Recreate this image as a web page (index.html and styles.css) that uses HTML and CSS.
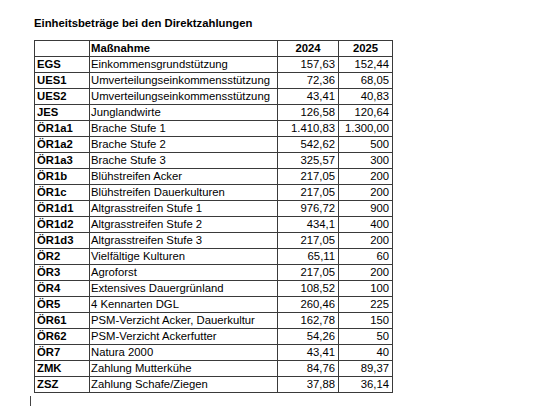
FILE: index.html
```html
<!DOCTYPE html>
<html lang="de">
<head>
<meta charset="utf-8">
<title>Einheitsbeträge bei den Direktzahlungen</title>
<link rel="stylesheet" href="styles.css">
</head>
<body>
<div class="page">
  <h1 class="title">Einheitsbeträge bei den Direktzahlungen</h1>
  <table class="grid">
    <colgroup>
      <col class="c-code">
      <col class="c-name">
      <col class="c-y1">
      <col class="c-y2">
    </colgroup>
    <thead>
      <tr><th class="code"></th><th class="name">Maßnahme</th><th class="year">2024</th><th class="year">2025</th></tr>
    </thead>
    <tbody>
      <tr><td class="code">EGS</td><td class="name">Einkommensgrundstützung</td><td class="num">157,63</td><td class="num">152,44</td></tr>
      <tr><td class="code">UES1</td><td class="name">Umverteilungseinkommensstützung</td><td class="num">72,36</td><td class="num">68,05</td></tr>
      <tr><td class="code">UES2</td><td class="name">Umverteilungseinkommensstützung</td><td class="num">43,41</td><td class="num">40,83</td></tr>
      <tr><td class="code">JES</td><td class="name">Junglandwirte</td><td class="num">126,58</td><td class="num">120,64</td></tr>
      <tr><td class="code">ÖR1a1</td><td class="name">Brache Stufe 1</td><td class="num">1.410,83</td><td class="num">1.300,00</td></tr>
      <tr><td class="code">ÖR1a2</td><td class="name">Brache Stufe 2</td><td class="num">542,62</td><td class="num">500</td></tr>
      <tr><td class="code">ÖR1a3</td><td class="name">Brache Stufe 3</td><td class="num">325,57</td><td class="num">300</td></tr>
      <tr><td class="code">ÖR1b</td><td class="name">Blühstreifen Acker</td><td class="num">217,05</td><td class="num">200</td></tr>
      <tr><td class="code">ÖR1c</td><td class="name">Blühstreifen Dauerkulturen</td><td class="num">217,05</td><td class="num">200</td></tr>
      <tr><td class="code">ÖR1d1</td><td class="name">Altgrasstreifen Stufe 1</td><td class="num">976,72</td><td class="num">900</td></tr>
      <tr><td class="code">ÖR1d2</td><td class="name">Altgrasstreifen Stufe 2</td><td class="num">434,1</td><td class="num">400</td></tr>
      <tr><td class="code">ÖR1d3</td><td class="name">Altgrasstreifen Stufe 3</td><td class="num">217,05</td><td class="num">200</td></tr>
      <tr><td class="code">ÖR2</td><td class="name">Vielfältige Kulturen</td><td class="num">65,11</td><td class="num">60</td></tr>
      <tr><td class="code">ÖR3</td><td class="name">Agroforst</td><td class="num">217,05</td><td class="num">200</td></tr>
      <tr><td class="code">ÖR4</td><td class="name">Extensives Dauergrünland</td><td class="num">108,52</td><td class="num">100</td></tr>
      <tr><td class="code">ÖR5</td><td class="name">4 Kennarten DGL</td><td class="num">260,46</td><td class="num">225</td></tr>
      <tr><td class="code">ÖR61</td><td class="name">PSM-Verzicht Acker, Dauerkultur</td><td class="num">162,78</td><td class="num">150</td></tr>
      <tr><td class="code">ÖR62</td><td class="name">PSM-Verzicht Ackerfutter</td><td class="num">54,26</td><td class="num">50</td></tr>
      <tr><td class="code">ÖR7</td><td class="name">Natura 2000</td><td class="num">43,41</td><td class="num">40</td></tr>
      <tr><td class="code">ZMK</td><td class="name">Zahlung Mutterkühe</td><td class="num">84,76</td><td class="num">89,37</td></tr>
      <tr><td class="code">ZSZ</td><td class="name">Zahlung Schafe/Ziegen</td><td class="num">37,88</td><td class="num">36,14</td></tr>
    </tbody>
  </table>
  <div class="caret"></div>
</div>
</body>
</html>
```

FILE: styles.css
```css
html, body {
  margin: 0;
  padding: 0;
  background: #ffffff;
}

.page {
  padding: 16px 0 0 34px;
  font-family: "Liberation Sans", Arial, sans-serif;
  font-size: 11.3px;
  color: #000000;
}

.title {
  margin: 0 0 10px 0;
  font-size: 11.3px;
  line-height: 14px;
  font-weight: bold;
}

.grid {
  border-collapse: collapse;
  table-layout: fixed;
  width: 358px;
}

.c-code { width: 55px; }
.c-name { width: 188px; }
.c-y1 { width: 61px; }
.c-y2 { width: 54px; }

.grid th,
.grid td {
  border: 1px solid #3a3a3a;
  padding: 0;
  line-height: 15px;
  height: 15px;
  white-space: nowrap;
  overflow: hidden;
  font-size: 11.3px;
}

.grid th {
  font-weight: bold;
}

.grid .code {
  font-weight: bold;
  padding-left: 2px;
  text-align: left;
}

.grid .name {
  padding-left: 1px;
  text-align: left;
}

.grid th.name {
  font-weight: bold;
}

.grid .year {
  text-align: center;
}

.grid .num {
  text-align: right;
  padding-right: 3px;
}

.caret {
  width: 1px;
  height: 10px;
  margin: 3px 0 0 -4px;
  background: #444444;
}
```
